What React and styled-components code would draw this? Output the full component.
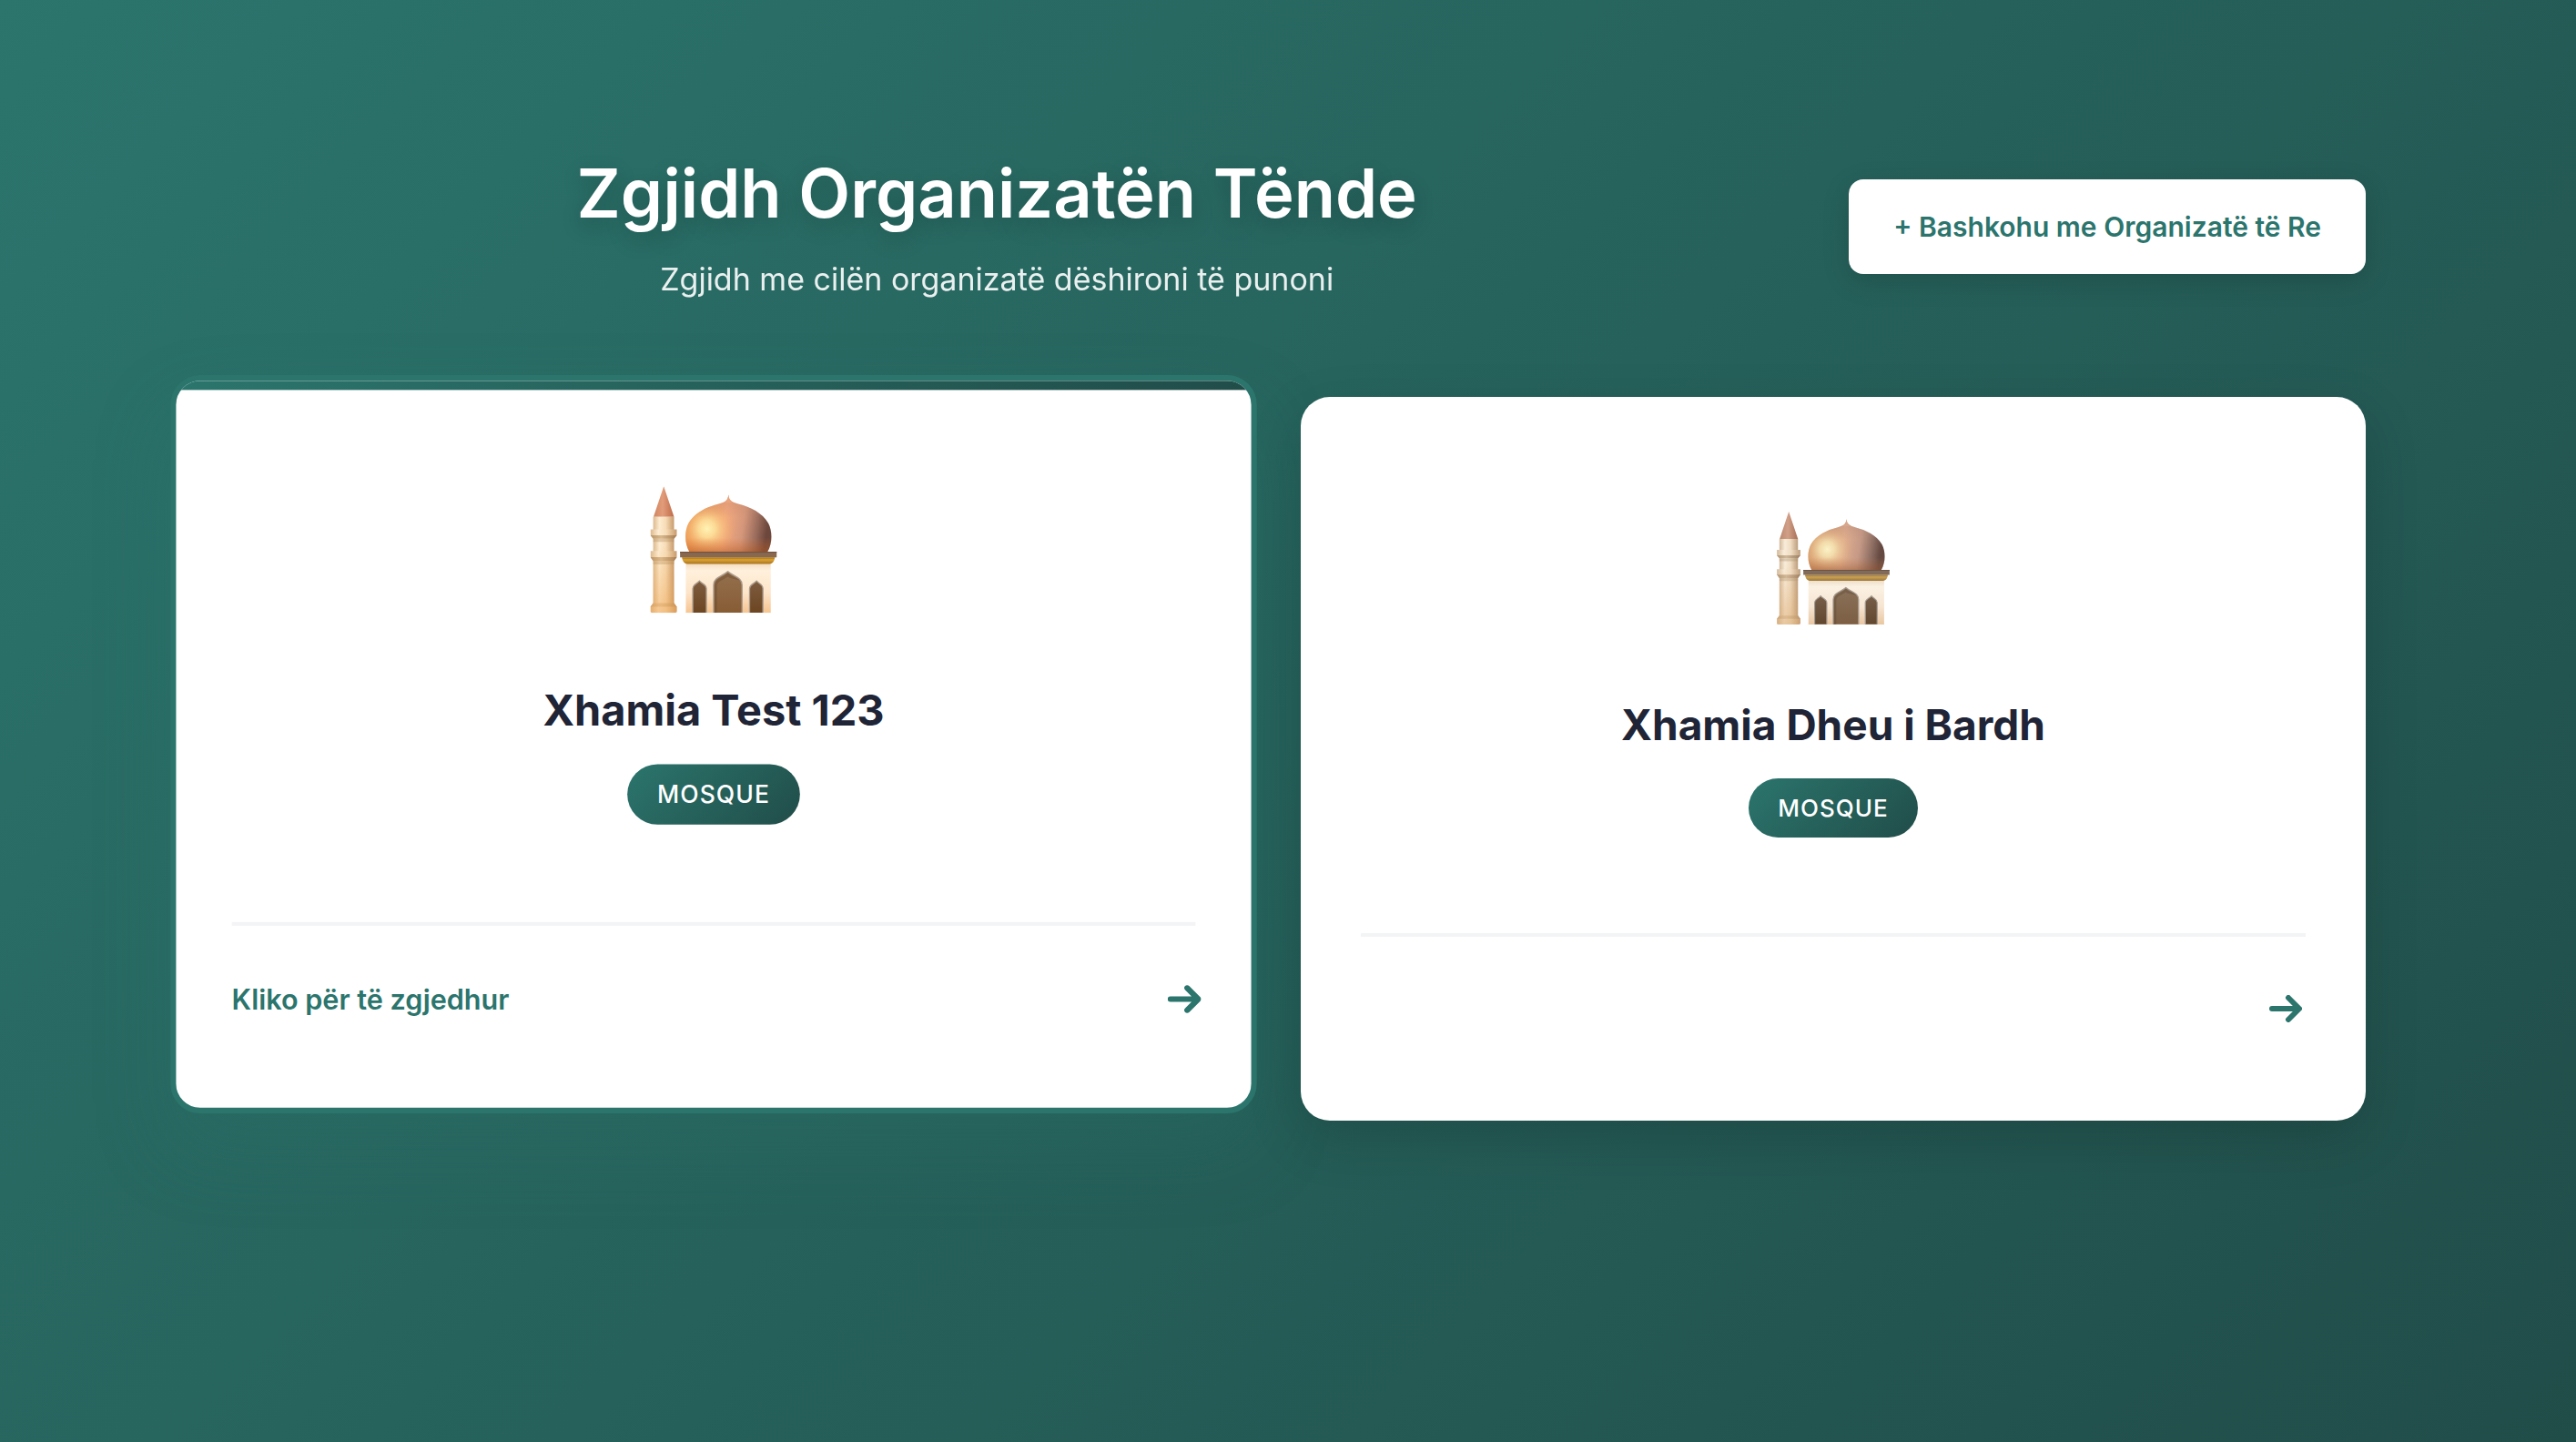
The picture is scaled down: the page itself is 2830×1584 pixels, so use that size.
import React, { useId } from 'react';
import styled, { createGlobalStyle, css } from 'styled-components';

const teal = '#2b756d';
const tealDark = '#214d49';
const gradient = `linear-gradient(135deg, ${teal} 0%, ${tealDark} 100%)`;

const GlobalStyle = createGlobalStyle`
  * {
    box-sizing: border-box;
  }

  body {
    margin: 0;
    font-family: Inter, "Liberation Sans", sans-serif;
    -webkit-font-smoothing: antialiased;
  }
`;

const Page = styled.main`
  min-height: 100vh;
  padding: 164px 64px 160px 32px;
  background: ${gradient};
`;

const Container = styled.div`
  max-width: 2400px;
  margin: 0 auto;
`;

const Header = styled.header`
  display: flex;
  align-items: center;
  gap: 40px;
  margin-bottom: 102px;
`;

const HeaderText = styled.div`
  flex: 1;
  text-align: center;
  color: #fff;
`;

const Title = styled.h1`
  margin: 0 0 20px;
  font-size: 74px;
  line-height: 96px;
  font-weight: 600;
  text-shadow: 0 8px 24px rgba(0, 0, 0, 0.2);
`;

const Subtitle = styled.p`
  margin: 0;
  font-size: 34px;
  line-height: 54px;
  font-weight: 400;
  opacity: 0.9;
`;

const JoinButton = styled.button`
  height: 104px;
  padding: 0 49px;
  border: 0;
  border-radius: 16px;
  background: #fff;
  color: ${teal};
  font-family: inherit;
  font-size: 30px;
  font-weight: 600;
  white-space: nowrap;
  cursor: pointer;
  box-shadow: 0 8px 30px rgba(0, 0, 0, 0.15);
`;

const Grid = styled.div`
  display: grid;
  grid-template-columns: repeat(auto-fit, minmax(700px, 1fr));
  gap: 60px;
`;

const CardIcon = styled.span`
  display: flex;
  align-items: center;
  justify-content: center;
  height: 204px;
  margin-bottom: 40px;
  filter: grayscale(0.3);

  svg {
    width: 124px;
    height: 124px;
  }
`;

const CardTitle = styled.span`
  margin-bottom: 29px;
  color: #1f2536;
  font-size: 46px;
  line-height: 60px;
  font-weight: 700;
`;

const Badge = styled.span`
  align-self: center;
  padding: 0 32px;
  border-radius: 33px;
  background: ${gradient};
  color: #fff;
  font-size: 26px;
  line-height: 65px;
  font-weight: 500;
  letter-spacing: 1px;
  text-transform: uppercase;
`;

const CardFooter = styled.span`
  display: flex;
  align-items: center;
  justify-content: space-between;
  height: 124px;
  margin-top: 105px;
  padding: 38px 4px 0 0;
  border-top: 4px solid #f3f4f6;
  color: ${teal};
  font-size: 30px;
  font-weight: 600;
`;

const Hint = styled.span`
  opacity: 0;
`;

const Arrow = styled.svg`
  width: 36px;
  height: 30px;
`;

// same look as :hover, kept on while the card is the active one
const raised = css`
  border-color: ${teal};
  transform: translateY(-16px) scale(1.02);
  box-shadow: 0 40px 80px rgba(44, 117, 109, 0.25);

  &::before {
    opacity: 1;
  }

  ${CardIcon} {
    filter: none;
  }

  ${CardIcon} svg {
    transform: scale(1.1);
  }

  ${Hint} {
    opacity: 1;
  }

  ${Arrow} {
    transform: translateX(10px);
  }
`;

const Card = styled.button`
  position: relative;
  display: flex;
  flex-direction: column;
  align-items: stretch;
  overflow: hidden;
  padding: 80px 60px 76px;
  border: 6px solid transparent;
  border-radius: 32px;
  background: #fff;
  font-family: inherit;
  text-align: center;
  cursor: pointer;
  box-shadow: 0 20px 60px rgba(0, 0, 0, 0.15);

  &::before {
    content: '';
    position: absolute;
    top: 0;
    left: 0;
    right: 0;
    height: 10px;
    background: linear-gradient(90deg, ${teal}, ${tealDark});
    opacity: 0;
  }

  &:hover {
    ${raised}
  }

  ${props => props.$active && raised}
`;

const Mosque = () => {
  const id = useId();
  const url = name => `url(#${id}${name})`;

  return (
    <svg viewBox="73 42 418 419" aria-hidden="true">
      <defs>
        <linearGradient id={`${id}spire`} x1="0" x2="1" y1="0" y2="0">
          <stop offset="0" stopColor="#cf8560" />
          <stop offset="0.45" stopColor="#e39c7a" />
          <stop offset="1" stopColor="#bd6a47" />
        </linearGradient>
        <linearGradient id={`${id}shaft`} x1="0" x2="1" y1="0" y2="0">
          <stop offset="0" stopColor="#dcb98d" />
          <stop offset="0.3" stopColor="#fdebd0" />
          <stop offset="0.6" stopColor="#f7dcb6" />
          <stop offset="1" stopColor="#c79a6c" />
        </linearGradient>
        <linearGradient id={`${id}warm`} x1="0" x2="0" y1="0" y2="1">
          <stop offset="0.3" stopColor="#f0a850" stopOpacity="0" />
          <stop offset="1" stopColor="#eda04a" stopOpacity="0.5" />
        </linearGradient>
        <linearGradient id={`${id}under`} x1="0" x2="1" y1="0" y2="0">
          <stop offset="0" stopColor="#b99468" />
          <stop offset="0.4" stopColor="#d9b88d" />
          <stop offset="1" stopColor="#a57c53" />
        </linearGradient>
        <linearGradient id={`${id}domeBase`} x1="0" x2="1" y1="0" y2="0.1">
          <stop offset="0" stopColor="#ea9248" />
          <stop offset="0.5" stopColor="#f3a97f" />
          <stop offset="0.72" stopColor="#d4967a" />
          <stop offset="0.88" stopColor="#9a6c5c" />
          <stop offset="1" stopColor="#6d473c" />
        </linearGradient>
        <radialGradient id={`${id}glow`} cx="260" cy="182" r="95" gradientUnits="userSpaceOnUse">
          <stop offset="0" stopColor="#fff3b4" />
          <stop offset="0.3" stopColor="#fde09a" stopOpacity="0.9" />
          <stop offset="1" stopColor="#f2a35c" stopOpacity="0" />
        </radialGradient>
        <linearGradient id={`${id}domeShade`} x1="0" x2="0" y1="0" y2="1">
          <stop offset="0.15" stopColor="#c08468" stopOpacity="0.3" />
          <stop offset="0.4" stopColor="#c08468" stopOpacity="0" />
          <stop offset="0.75" stopColor="#d9702c" stopOpacity="0" />
          <stop offset="1" stopColor="#b4561e" stopOpacity="0.5" />
        </linearGradient>
        <linearGradient id={`${id}gold`} x1="0" x2="0" y1="0" y2="1">
          <stop offset="0" stopColor="#a46d12" />
          <stop offset="0.35" stopColor="#dba233" />
          <stop offset="1" stopColor="#a8741f" />
        </linearGradient>
        <linearGradient id={`${id}wall`} x1="0" x2="0" y1="0" y2="1">
          <stop offset="0" stopColor="#f3dcc0" />
          <stop offset="0.15" stopColor="#fff0dc" />
          <stop offset="0.6" stopColor="#fde4c8" />
          <stop offset="1" stopColor="#f6c490" />
        </linearGradient>
        <linearGradient id={`${id}door`} x1="0" x2="0" y1="0" y2="1">
          <stop offset="0" stopColor="#94704e" />
          <stop offset="1" stopColor="#875c35" />
        </linearGradient>
        <linearGradient id={`${id}window`} x1="0" x2="0" y1="0" y2="1">
          <stop offset="0" stopColor="#7e5c40" />
          <stop offset="1" stopColor="#6c4522" />
        </linearGradient>
      </defs>

      {/* minaret */}
      <path d="M117 42L151 143H83Z" fill={url('spire')} />
      <path d="M82 143H151V435H82Z" fill={url('shaft')} />
      <path d="M82 215H151V226H82ZM82 288H151V300H82Z" fill="#b08a5c" opacity="0.35" />
      <path d="M73 184H160V204L151 215H82L73 204Z" fill={url('shaft')} />
      <path d="M73 204H160L151 215H82Z" fill={url('under')} />
      <path d="M73 256H160V276L151 289H82L73 276Z" fill={url('shaft')} />
      <path d="M73 276H160L151 289H82Z" fill={url('under')} />
      <path d="M82 428H151L160 440V456L155 461H78L73 456V440Z" fill={url('shaft')} />
      <path d="M82 428H151L160 440H73Z" fill={url('under')} opacity="0.6" />
      <path d="M82 143H151V428L160 440V461H73V440L82 428Z" fill={url('warm')} />

      {/* dome */}
      {['domeBase', 'glow', 'domeShade'].map(layer => (
        <path
          key={layer}
          d="M202 259C185 232 185 190 199 164C218 130 260 110 296 101C318 95 329 90 331 70C333 90 345 95 366 101C402 110 444 130 463 164C477 190 477 232 460 259Z"
          fill={url(layer)}
        />
      ))}
      <path d="M331 70C329 88 326 92 318 96H344C336 92 333 88 331 70Z" fill="#e9a47c" />

      {/* cornice and wall */}
      <path d="M190 296H471V461H190Z" fill={url('wall')} />
      <path d="M171 258H491V277H171Z" fill="#896850" />
      <path d="M171 258H491V262H171Z" fill="#73543f" />
      <path d="M177 277H485C483 290 478 297 468 299H194C184 297 179 290 177 277Z" fill={url('gold')} />

      {/* openings */}
      <g stroke="#a99a8c" strokeWidth="4">
        <path d="M282 460V368C283 343 307 342 329 324C351 342 375 343 376 368V460" fill={url('door')} />
        <path d="M213 460V380C214 365 226 366 235 355C244 366 257 365 258 380V460" fill={url('window')} />
        <path d="M401 460V380C402 365 415 366 424 355C433 366 444 365 445 380V460" fill={url('window')} />
      </g>
      <path d="M285 461V370C286 348 309 345 329 328C345 342 362 345 369 354C350 346 338 349 329 341C312 353 295 354 293 372V461Z" fill="#5f4128" opacity="0.35" />
    </svg>
  );
};

const organizations = [
  { name: 'Xhamia Test 123', type: 'Mosque', active: true },
  { name: 'Xhamia Dheu i Bardh', type: 'Mosque', active: false },
];

const OrganizationCard = props => (
  <Card type="button" $active={props.active}>
    <CardIcon>
      <Mosque />
    </CardIcon>
    <CardTitle>{props.name}</CardTitle>
    <Badge>{props.type}</Badge>
    <CardFooter>
      <Hint>{props.active && 'Kliko për të zgjedhur'}</Hint>
      <Arrow
        viewBox="0 0 36 30"
        fill="none"
        stroke="currentColor"
        strokeWidth="6"
        strokeLinecap="round"
        strokeLinejoin="round"
        aria-hidden="true"
      >
        <path d="M3 15H32M21 3L33 15L21 27" />
      </Arrow>
    </CardFooter>
  </Card>
);

const App = () => (
  <>
    <GlobalStyle />
    <Page>
      <Container>
        <Header>
          <HeaderText>
            <Title>Zgjidh Organizatën Tënde</Title>
            <Subtitle>Zgjidh me cilën organizatë dëshironi të punoni</Subtitle>
          </HeaderText>
          <JoinButton type="button">+ Bashkohu me Organizatë të Re</JoinButton>
        </Header>
        <Grid>
          {organizations.map(org => (
            <OrganizationCard key={org.name} {...org} />
          ))}
        </Grid>
      </Container>
    </Page>
  </>
);

export default App;
